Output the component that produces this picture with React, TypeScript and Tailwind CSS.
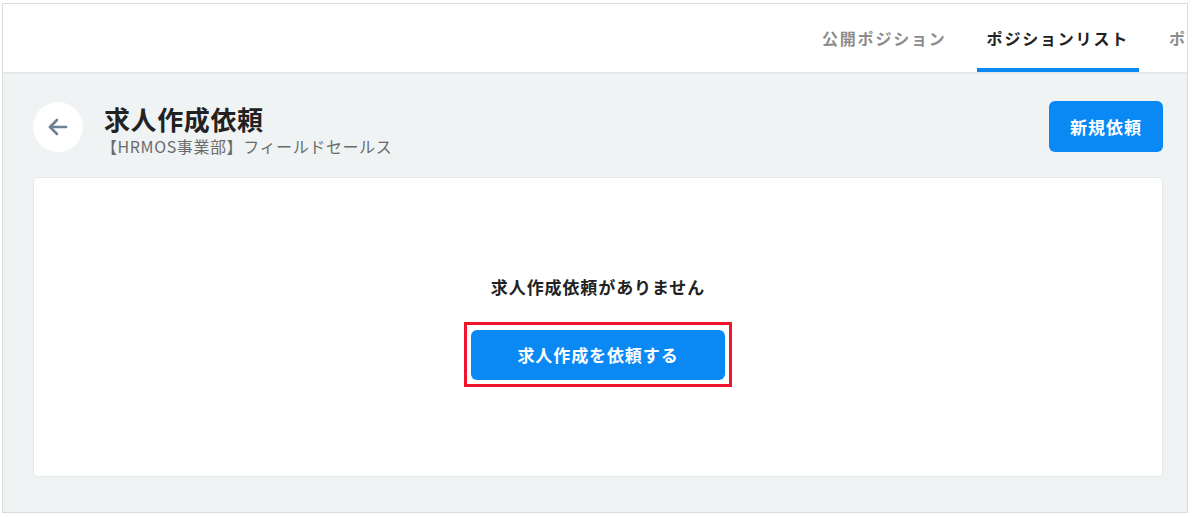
const font = { fontFamily: '"Noto Sans CJK JP", "Noto Sans", sans-serif' };

function BackIcon() {
  return (
    <svg width="22" height="22" viewBox="0 0 22 22" fill="none" stroke="#6b8094" strokeWidth="2.6" strokeLinecap="round" strokeLinejoin="round">
      <path d="M19 11H3" />
      <path d="M10 4l-7 7 7 7" />
    </svg>
  );
}

export default function App() {
  const tabs = [
    { label: "公開ポジション", active: false },
    { label: "ポジションリスト", active: true },
    { label: "ポジション設定", active: false },
  ];

  return (
    <div className="w-[1192px] h-[517px] bg-white pl-[2px] pt-[3px]" style={font}>
      <div className="w-[1186px] h-[510px] border border-[#dcdcdc] bg-[#f0f3f4] flex flex-col overflow-hidden">
        <header className="h-[68px] bg-white shadow-[0_1px_2px_rgba(0,0,0,0.08)] flex pl-[809px] gap-[20px] overflow-hidden shrink-0">
          {tabs.map((t) => (
            <div key={t.label} className="relative h-full px-[10px] flex items-center shrink-0">
              <span
                className={
                  "text-[16px] font-bold tracking-[1.8px] whitespace-nowrap " +
                  (t.active ? "text-[#222]" : "text-[#8c8c8c]")
                }
              >
                {t.label}
              </span>
              {t.active && <div className="absolute left-0 right-0 bottom-0 h-[4px] bg-[#0a89f4]" />}
            </div>
          ))}
        </header>

        <main className="flex-1 pl-[30px] pr-[24px] pt-[29px]">
          <div className="flex items-center justify-between h-[51px]">
            <div className="flex items-center">
              <button className="w-[50px] h-[50px] rounded-full bg-white flex items-center justify-center">
                <BackIcon />
              </button>
              <div className="ml-[21px] flex flex-col mt-[6px]">
                <h1 className="text-[26px] font-bold text-[#222] leading-[32px] tracking-[0.6px]">求人作成依頼</h1>
                <p className="text-[16px] text-[#6b6b6b] leading-[22px] -ml-[3px] tracking-[0.6px]">【HRMOS事業部】フィールドセールス</p>
              </div>
            </div>
            <button className="w-[114px] h-[51px] rounded-[6px] bg-[#0a89f4] text-white text-[17px] font-bold tracking-[1px]">
              新規依頼
            </button>
          </div>

          <div className="mt-[25px] h-[300px] bg-white rounded-[4px] border border-[#e6eaeb] flex flex-col items-center pt-[98px]">
            <p className="text-[17px] font-bold text-[#222] leading-[22px] tracking-[0.9px]">求人作成依頼がありません</p>
            <div className="mt-[24px] border-[3px] border-[#f2142c] px-[4px] pt-[5px] pb-[4px]">
              <button className="w-[254px] h-[50px] rounded-[6px] bg-[#0a89f4] text-white text-[17px] font-bold tracking-[0.9px]">
                求人作成を依頼する
              </button>
            </div>
          </div>
        </main>
      </div>
    </div>
  );
}
